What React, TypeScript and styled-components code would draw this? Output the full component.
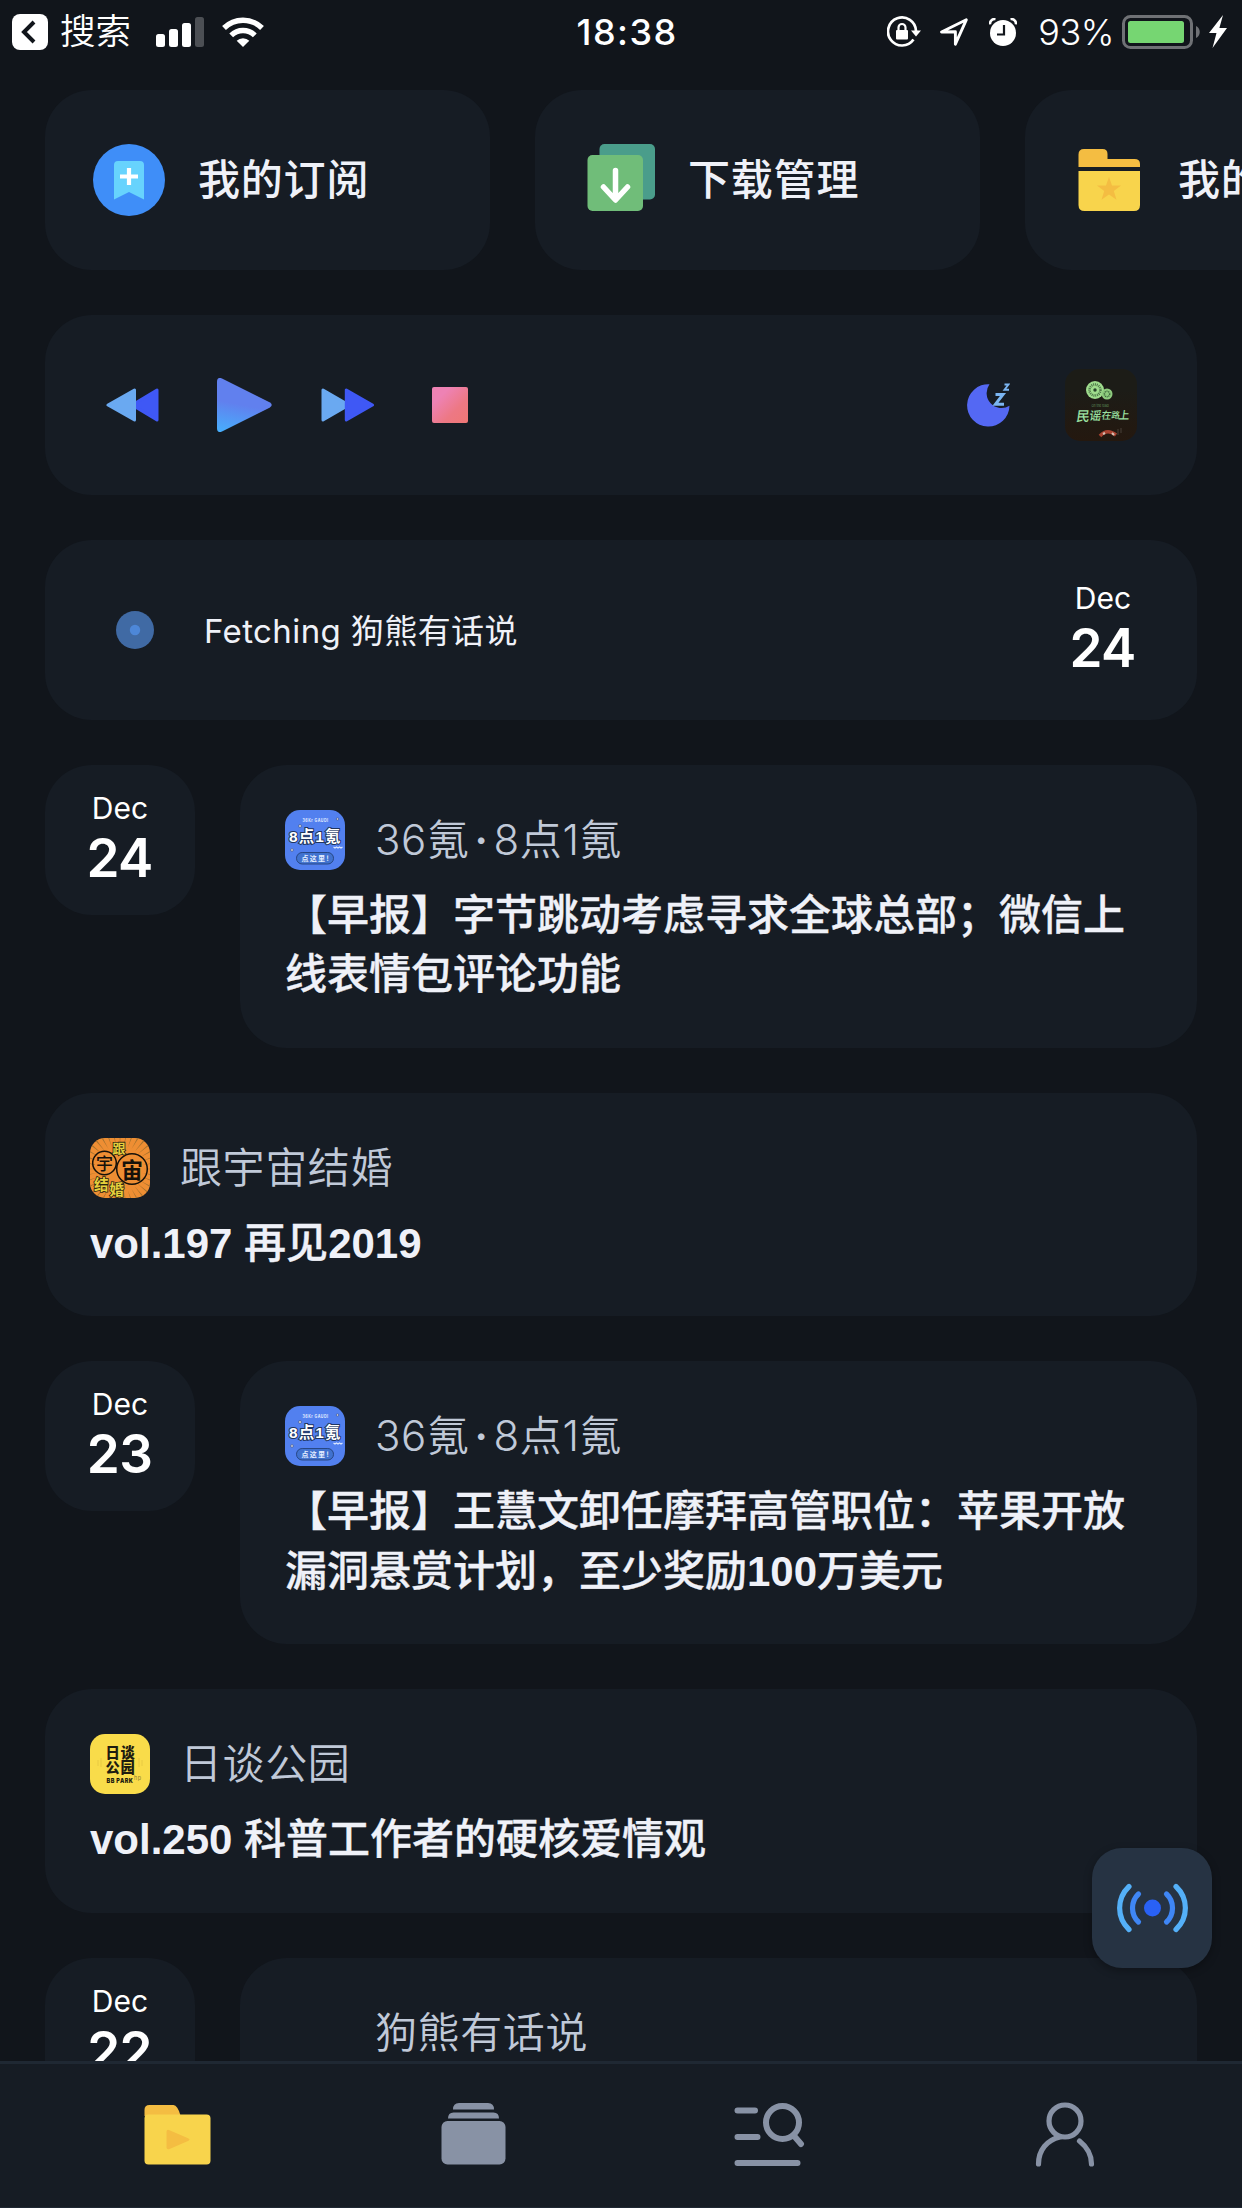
import React from 'react';
import styled, { createGlobalStyle } from 'styled-components';

const cjk = '"Noto Sans CJK SC", sans-serif';
const ui = `Inter, ${cjk}`;
const headline = `"Liberation Sans", ${cjk}`;

const colors = {
  page: '#11151b',
  card: '#161c24',
  line: '#1f2833',
  bright: '#eff1f8',
  muted: '#c0c9d8',
  tab: '#8892a5',
};

const GlobalStyle = createGlobalStyle`
  * { box-sizing: border-box; }
  body { margin: 0; background: ${colors.page}; }
  svg { display: block; flex: none; }
`;

const Screen = styled.div`
  position: relative;
  display: flex;
  flex-direction: column;
  width: 1242px;
  height: 2208px;
  overflow: hidden;
  background: ${colors.page};
  font-family: ${ui};
  color: #fff;
  text-spacing-trim: space-all;
`;

const StatusBar = styled.header`
  display: grid;
  grid-template-columns: 576.500px auto 1fr;
  align-items: center;
  flex: none;
  height: 62px;
  padding: 0 15px 0 0;
  font-size: 36px;
  line-height: 62px;
`;

const StatusGroup = styled.div<{ $end?: boolean }>`
  display: flex;
  align-items: center;
  justify-content: ${(p) => (p.$end ? 'flex-end' : 'flex-start')};
  padding-left: ${(p) => (p.$end ? 0 : 12)}px;
`;

const BackLabel = styled.span`
  margin: 0 25px 0 12px;
  padding-top: 1px;
  font-size: 35.5px;
  font-weight: 350;
`;

const Clock = styled.span`
  font-weight: 500;
  font-size: 36px;
  letter-spacing: 1.5px;
`;

const Percent = styled.span`
  margin: 0 8px 0 21px;
  font-size: 36px;
  font-weight: 300;
  letter-spacing: -0.5px;
`;

const Feed = styled.main`
  display: flex;
  flex-direction: column;
  flex: 1;
  min-height: 0;
  gap: 45px;
  padding: 28px 45px 0;
  overflow: hidden;
`;

const Shortcuts = styled.div`
  display: flex;
  flex: none;
  gap: 45px;
  margin-right: -45px;
  overflow: hidden;
`;

const Card = styled.section`
  flex: none;
  background: ${colors.card};
  border-radius: 47px;
`;

const Shortcut = styled(Card)`
  display: flex;
  align-items: center;
  gap: 33px;
  width: 445px;
  height: 180px;
  padding: 0 48px;
`;

const ShortcutLabel = styled.span`
  padding-bottom: 1px;
  font-size: 42px;
  font-weight: 500;
  letter-spacing: 0.8px;
  line-height: 60px;
  white-space: nowrap;
  color: ${colors.bright};
`;

const Player = styled(Card)`
  display: flex;
  align-items: center;
  justify-content: space-between;
  height: 180px;
  padding: 0 60px 0 61px;
`;

const Controls = styled.div<{ $gap: number }>`
  display: flex;
  align-items: center;
  gap: ${(p) => p.$gap}px;
`;

const SkipControls = styled(Controls)`
  margin-left: -9px;
`;

const Fetching = styled(Card)`
  display: flex;
  align-items: center;
  height: 180px;
  padding: 0 19px 0 71px;
`;

const FetchText = styled.span`
  flex: 1;
  margin-left: 50px;
  padding-bottom: 3px;
  font-size: 33px;
  letter-spacing: 0.4px;
  color: ${colors.bright};
`;

const DateBox = styled.div`
  display: flex;
  flex-direction: column;
  align-items: center;
  flex: none;
  width: 150px;
  height: 150px;
  padding-top: 25px;
  border-radius: 47px;
`;

const DateTile = styled(DateBox)`
  background: ${colors.card};
`;

const Month = styled.span`
  font-size: 30px;
  line-height: 36px;
`;

const Day = styled.span`
  font-size: 53px;
  font-weight: 600;
  line-height: 64px;
  letter-spacing: -0.7px;
  margin-left: -1px;
`;

const DayRow = styled.div`
  display: flex;
  flex: none;
  align-items: flex-start;
  gap: 45px;
`;

const Episode = styled(Card)`
  flex: 1 0 0;
  padding: 45px 45px 43.2px;
`;

const WideEpisode = styled(Card)`
  padding: 45px 45px 43.2px;
`;

const Source = styled.div`
  display: flex;
  align-items: center;
  gap: 30px;
  height: 60px;
  font-size: 42px;
  font-weight: 350;
  letter-spacing: 0.6px;
  line-height: 60px;
  color: ${colors.muted};
`;

const Dot = styled.span`
  margin: 0 5px;
  font-weight: 600;
`;

const Headline = styled.h2`
  margin: 16px 0 0;
  font-family: ${headline};
  font-size: 42px;
  font-weight: 500;
  line-height: 59.3px;
  color: ${colors.bright};
  -webkit-text-stroke: 0.35px ${colors.bright};
`;

const Latin = styled.span`
  font-weight: 700;
  -webkit-text-stroke: 0;
`;

const CoverSlot = styled.div<{ $size: number }>`
  width: ${(p) => p.$size}px;
  height: ${(p) => p.$size}px;
  border-radius: 15px;
  overflow: hidden;
  flex: none;
`;

const Fab = styled.button`
  position: absolute;
  right: 30px;
  bottom: 240px;
  display: flex;
  align-items: center;
  justify-content: center;
  width: 120px;
  height: 120px;
  padding: 0;
  border: 0;
  border-radius: 30px;
  background: #263343;
  box-shadow: 0 3px 9px rgba(0, 0, 0, 0.3);
`;

const TabBar = styled.nav`
  display: grid;
  grid-template-columns: repeat(4, 1fr);
  flex: none;
  height: 147px;
  padding: 0 29px 2px 30px;
  border-top: 3px solid ${colors.line};
  border-bottom: 1px solid ${colors.line};
  background: ${colors.card};
`;

const Tab = styled.div`
  display: flex;
  align-items: center;
  justify-content: center;
`;

function BackIcon() {
  return (
    <svg width="36" height="36" viewBox="0 0 36 36">
      <rect width="36" height="36" rx="8" fill="#fff" />
      <path d="M22 8 12 18l10 10" fill="none" stroke={colors.page} strokeWidth="4" />
    </svg>
  );
}

function SignalIcon() {
  return (
    <svg width="48" height="30" viewBox="0 0 48 30" fill="#fff">
      <rect y="17" width="9" height="13" rx="2.5" />
      <rect x="13" y="12" width="9" height="18" rx="2.5" />
      <rect x="26" y="6" width="9" height="24" rx="2.5" />
      <rect x="39" width="9" height="30" rx="2.5" fill="#4c4f54" />
    </svg>
  );
}

const Wifi = styled.svg`
  margin-left: 18px;
`;

function WifiIcon() {
  return (
    <Wifi width="42" height="30" viewBox="0 0 42 30" fill="none" stroke="#fff" strokeWidth="5.4">
      <path d="M2 11a27 27 0 0 1 38 0" />
      <path d="M9.2 18.4a16.800 16.800 0 0 1 23.600 0" />
      <path d="M21 30l-6.300-6.300a9 9 0 0 1 12.600 0z" fill="#fff" stroke="none" />
    </Wifi>
  );
}

function RotationLockIcon() {
  return (
    <svg width="34" height="32" viewBox="0 0 34 32">
      <path d="M26.500 23.500A14 14 0 1 1 29 15" fill="none" stroke="#fff" strokeWidth="2.700" />
      <path d="M24 14.500h10l-5 6z" fill="#fff" />
      <rect x="9" y="14" width="12" height="9.500" rx="1" fill="#fff" />
      <path d="M11.500 15v-3.500a3.500 3.500 0 0 1 7 0V15" fill="none" stroke="#fff" strokeWidth="2.200" />
    </svg>
  );
}

const Spaced = styled.svg<{ $left: number }>`
  margin-left: ${(p) => p.$left}px;
`;

function LocationIcon() {
  return (
    <Spaced $left={19} width="28" height="28" viewBox="0 0 28 28" fill="none" stroke="#fff" strokeWidth="2.900" strokeLinejoin="round">
      <path d="M1.500 14 26.300 1.800 15.400 26.200V13.800z" />
    </Spaced>
  );
}

function AlarmIcon() {
  return (
    <Spaced $left={21} width="28" height="28" viewBox="0 0 28 28">
      <circle cx="14" cy="15" r="13" fill="#fff" />
      <path d="M1 6.500A5 5 0 0 1 6.500 1M27 6.500A5 5 0 0 0 21.500 1" fill="none" stroke="#fff" strokeWidth="2.600" />
      <path d="M15 7v9.500H8" fill="none" stroke={colors.page} strokeWidth="2.200" />
    </Spaced>
  );
}

function BatteryIcon() {
  return (
    <svg width="78" height="34" viewBox="0 0 78 34">
      <rect x="1.500" y="1.500" width="68" height="31" rx="7" fill="none" stroke="#6f7175" strokeWidth="3" />
      <rect x="6" y="6" width="56" height="22" rx="2.500" fill="#76d672" />
      <path d="M74 11c5 2 5 10 0 12z" fill="#6f7175" />
    </svg>
  );
}

function BoltIcon() {
  return (
    <Spaced $left={9} width="18" height="33" viewBox="0 0 18 33" fill="#fff">
      <path d="M14 0 0 18h7.500L3.500 33 18 13h-7.600z" />
    </Spaced>
  );
}

function SubscribeIcon() {
  return (
    <svg width="72" height="72" viewBox="0 0 72 72">
      <circle cx="36" cy="36" r="36" fill="#3f8ef8" />
      <path d="M25 17h22a4 4 0 0 1 4 4v34.500L36 48l-15 7.500V21a4 4 0 0 1 4-4z" fill="#67d3fd" />
      <path d="M36 24v17M27 32.500h18" stroke="#fff" strokeWidth="4.200" />
    </svg>
  );
}

function DownloadIcon() {
  return (
    <svg width="72" height="72" viewBox="0 0 72 72">
      <rect x="16.500" y="0" width="55.500" height="55.500" rx="5" fill="#4a9d8b" />
      <rect x="4.500" y="11" width="55.500" height="56" rx="5" fill="#70bd79" />
      <path d="M32.500 26.500V54M20.500 43l12 13 12-13" fill="none" stroke="#fff" strokeWidth="5.500" strokeLinecap="round" strokeLinejoin="round" />
    </svg>
  );
}

function FavouritesIcon() {
  return (
    <svg width="72" height="72" viewBox="0 0 72 72">
      <path d="M5.500 23V10.500Q5.500 5 11 5h18.500Q34.500 5 34.500 10v5h27q5.500 0 5.500 5V23z" fill="#f4bd42" />
      <path d="M5.500 27h61.500v34q0 6-6 6h-49.500q-6 0-6-6z" fill="#f8d44c" />
      <path d="m36 33 3 8.500h9l-7.200 5.400 2.700 8.900L36 50.500l-7.500 5.300 2.700-8.900-7.200-5.400h9z" fill="#f4bd42" />
    </svg>
  );
}

function RewindIcon() {
  return (
    <svg width="53" height="36" viewBox="0 0 53 36" strokeLinejoin="round" strokeWidth="3">
      <path d="M51 3v30L26 18z" fill="#3f58f5" stroke="#3f58f5" />
      <path d="M28.500 3v30L2 18z" fill="#6aa9f1" stroke="#6aa9f1" />
    </svg>
  );
}

function ForwardIcon() {
  return (
    <svg width="53" height="36" viewBox="0 0 53 36" strokeLinejoin="round" strokeWidth="3">
      <path d="M2 3v30l26-15z" fill="#6aa9f1" stroke="#6aa9f1" />
      <path d="M25.300 3v30L51.500 18z" fill="#3f58f5" stroke="#3f58f5" />
    </svg>
  );
}

function PlayIcon() {
  return (
    <svg width="55" height="54" viewBox="0 0 55 54">
      <defs>
        <linearGradient id="play" x1="0.300" y1="0" x2="0.100" y2="1">
          <stop offset="0.450" stopColor="#6180ee" />
          <stop offset="1" stopColor="#47aefc" />
        </linearGradient>
      </defs>
      <path d="M0 4q0-5.500 5-3.600L52.500 24.300q4.500 2.700 0 5.400L5 53.600Q0 55.500 0 50z" fill="url(#play)" />
    </svg>
  );
}

function StopIcon() {
  return (
    <svg width="36" height="36" viewBox="0 0 36 36">
      <defs>
        <linearGradient id="stop" x1="0" y1="0" x2="1" y2="1">
          <stop offset="0.250" stopColor="#ee82b4" />
          <stop offset="0.650" stopColor="#ed7884" />
          <stop offset="1" stopColor="#ef7775" />
        </linearGradient>
      </defs>
      <rect width="36" height="36" rx="2" fill="url(#stop)" />
    </svg>
  );
}

function SleepIcon() {
  return (
    <svg width="43" height="45" viewBox="0 0 43 45">
      <path d="M22.500 1.200A15 15 0 0 0 42.500 22.800 21.200 21.200 0 1 1 22.500 1.200z" fill="#5468f3" />
      <g fill="none" stroke="#7bb5f2">
        <path d="M28.500 11.500h7.500l-7.500 9.700h8.500" strokeWidth="3" />
        <path d="M37.500 1.500h4l-4 5.200h4.500" strokeWidth="1.900" />
      </g>
    </svg>
  );
}

function FolkCover() {
  return (
    <CoverSlot $size={72}>
      <svg width="72" height="72" viewBox="0 0 72 72">
        <defs>
          <linearGradient id="folk" x1="0" y1="0" x2="0" y2="1">
            <stop offset="0.300" stopColor="#1c1c17" />
            <stop offset="1" stopColor="#24180f" />
          </linearGradient>
        </defs>
        <rect width="72" height="72" fill="url(#folk)" />
        <circle cx="30" cy="21" r="9" fill="#9fdc8d" />
        <circle cx="30" cy="21" r="5.500" fill="none" stroke="#4d7848" strokeWidth="2.500" strokeDasharray="1 .8" />
        <circle cx="30" cy="21" r="1.700" fill="#28452a" />
        <circle cx="42" cy="25" r="5.500" fill="#8ecb7e" />
        <circle cx="42" cy="25" r="2.700" fill="none" stroke="#3d683c" strokeWidth="1.500" strokeDasharray="1 .7" />
        <text x="26.500" y="37.500" fontFamily="Inter" fontSize="4" fill="#5f965c" textLength="17" lengthAdjust="spacingAndGlyphs">On the road</text>
        <g fontFamily={cjk} fontWeight="500" fill="#9be0a0" transform="skewX(-8)">
          <text x="18" y="52" fontSize="13.500">民</text>
          <text x="31" y="51" fontSize="12">谣</text>
          <text x="43" y="50" fontSize="10">在</text>
          <text x="53" y="49" fontSize="8.500">路</text>
          <text x="60" y="50" fontSize="11">上</text>
        </g>
        <path d="M35 67q7-8 16-1" fill="none" stroke="#a94331" strokeWidth="3.500" />
        <path d="M38 65l2-1M47 64l2 2" stroke="#d6c2b6" strokeWidth="2" />
        <path d="M53 60v6M56 59v5" stroke="#494039" strokeWidth="1" />
      </svg>
    </CoverSlot>
  );
}

function KrCover() {
  return (
    <CoverSlot $size={60}>
      <svg width="60" height="60" viewBox="0 0 60 60">
        <rect width="60" height="60" fill="#5280ef" />
        <text x="17.500" y="12" fontFamily="Inter" fontSize="4.300" fontWeight="700" fill="#e3edff" textLength="26" lengthAdjust="spacingAndGlyphs">36Kr GAUDI</text>
        <g fill="#d8d6dc" stroke="#304c8b" strokeWidth="0.600">
          <circle cx="52.500" cy="9" r="1.200" />
          <circle cx="15" cy="16" r="1.500" />
          <circle cx="7" cy="40" r="1.400" />
        </g>
        <text x="4" y="32" fontFamily={`"Liberation Sans", ${cjk}`} fontSize="15.500" fontWeight="700" fill="#fff" stroke="#20355f" strokeWidth="2" paintOrder="stroke" textLength="52">8点1氪</text>
        <path d="M48.500 37l1.500 1 1.500-1 1.500 1 1.500-1 1.500 1 1.500-1" fill="none" stroke="#d9e6ff" strokeWidth="1.200" />
        <rect x="11.500" y="42.500" width="37" height="11.500" rx="5.700" fill="#4072cf" stroke="#284784" strokeWidth="1" />
        <text x="16.500" y="50.700" fontFamily={cjk} fontSize="7" fontWeight="700" fill="#e6efff" textLength="28">点这里!</text>
      </svg>
    </CoverSlot>
  );
}

function CosmosCover() {
  const rays = Array.from({ length: 36 }, (_, i) => i * 10);
  return (
    <CoverSlot $size={60}>
      <svg width="60" height="60" viewBox="0 0 60 60" fontFamily={cjk} fontWeight="700">
        <rect width="60" height="60" fill="#ee8e33" />
        {rays.map((angle) => (
          <path key={angle} d="M30 8 29 -16h2.200z" fill="#a4712d" transform={`rotate(${angle} 30 31)`} />
        ))}
        <g fill="none" stroke="#15110a" strokeWidth="1.500">
          <circle cx="14.500" cy="25" r="11.800" />
          <circle cx="42" cy="31" r="15.300" />
        </g>
        <g fill="#15110a">
          <text x="6" y="31.500" fontSize="17" fontWeight="500">宇</text>
          <text x="31" y="39.500" fontSize="22">宙</text>
        </g>
        <g fill="#e6d03c" stroke="#2b2410" strokeWidth="1.600" paintOrder="stroke">
          <text x="22.500" y="14.700" fontSize="13">跟</text>
          <text x="4" y="52" fontSize="14.500">结</text>
          <text x="19.500" y="56.500" fontSize="14.500">婚</text>
        </g>
      </svg>
    </CoverSlot>
  );
}

function ParkCover() {
  return (
    <CoverSlot $size={60}>
      <svg width="60" height="60" viewBox="0 0 60 60" fontFamily={cjk} fontWeight="900" fill="#1e1c10">
        <rect width="60" height="60" fill="#f9dc4a" />
        <path d="M8 26v6M11 24v9M49 24v9M52 26v6" stroke="#e8ca43" strokeWidth="1" />
        <text x="15.500" y="24" fontSize="14.300">日谈</text>
        <text x="15.500" y="39" fontSize="14.300">公园</text>
        <text x="16.500" y="49" fontFamily="Inter" fontSize="6.300" textLength="27" lengthAdjust="spacingAndGlyphs">BB PARK</text>
        <text x="44" y="46" fontFamily="Inter" fontSize="5.500" fontWeight="400" fill="#8d7e32">hp</text>
      </svg>
    </CoverSlot>
  );
}

function LoadingDot() {
  return (
    <svg width="38" height="38" viewBox="0 0 38 38">
      <circle cx="19" cy="19" r="19" fill="#406aa4" />
      <circle cx="19" cy="19" r="5.200" fill="#4d87d8" />
    </svg>
  );
}

function BroadcastIcon() {
  return (
    <svg width="71" height="50" viewBox="0 0 71 50" fill="none" strokeWidth="5.200" strokeLinecap="round">
      <circle cx="35.500" cy="25" r="8.500" fill="#2961f5" />
      <path d="M21.500 11c-8 7.500-8 20.500 0 28M49.500 11c8 7.500 8 20.500 0 28" stroke="#3f86f5" />
      <path d="M12 3.500c-12.500 12-12.500 31 0 43M59 3.500c12.500 12 12.500 31 0 43" stroke="#54b0f8" />
    </svg>
  );
}

function FolderTab() {
  return (
    <svg width="67" height="60" viewBox="0 0 67 60">
      <path d="M.5 11V5q0-5 5-5h24q4 0 7 10.500z" fill="#f4bd42" />
      <rect x=".5" y="9.500" width="66" height="50" rx="4" fill="#f8d44c" />
      <path d="M22.500 27q0-3 3-1.800l18.500 8q3 1.300 0 2.800l-18.500 8q-3 1.200-3-1.800z" fill="#f4bd42" />
    </svg>
  );
}

function StackTab() {
  return (
    <svg width="65" height="64" viewBox="0 0 65 64" fill={colors.tab}>
      <path d="M12 6.500Q12 0 18 0h29q6 0 6 6.500zM7 15.500Q7 9.500 12.500 9.500h40q5.500 0 5.500 6z" />
      <rect x=".5" y="18" width="64" height="43.500" rx="6" />
    </svg>
  );
}

function SearchTab() {
  return (
    <svg width="71" height="63" viewBox="0 0 71 63" fill="none" stroke={colors.tab} strokeWidth="6" strokeLinecap="round">
      <path d="M3.500 7.500h17.500M3.500 34h20M3.500 60h60" />
      <circle cx="48.500" cy="19.500" r="16.500" />
      <path d="m61 34 6 7" />
    </svg>
  );
}

function ProfileTab() {
  return (
    <svg width="60" height="65" viewBox="0 0 60 65" fill="none" stroke={colors.tab} strokeWidth="5.200" strokeLinecap="round">
      <circle cx="30" cy="19" r="16" />
      <path d="M25 35C12 38 3.500 48 3.500 62M44.500 39C52 45 56.500 53 56.500 62" />
    </svg>
  );
}

function HeadlineText({ text }: { text: string }) {
  return (
    <div>
      {text.split(/([\x20-\x7e]+)/).map((part, i) =>
        i % 2 ? <Latin key={i}>{part}</Latin> : part,
      )}
    </div>
  );
}

function SourceName({ name }: { name: string }) {
  const [first, second] = name.split('·');
  return (
    <span>
      {first}
      {second && <><Dot>·</Dot>{second}</>}
    </span>
  );
}

const episodes = [
  { date: ['Dec', '24'], source: '36氪·8点1氪', Cover: KrCover, title: ['【早报】字节跳动考虑寻求全球总部；微信上', '线表情包评论功能'] },
  { source: '跟宇宙结婚', Cover: CosmosCover, title: ['vol.197 再见2019'] },
  { date: ['Dec', '23'], source: '36氪·8点1氪', Cover: KrCover, title: ['【早报】王慧文卸任摩拜高管职位：苹果开放', '漏洞悬赏计划，至少奖励100万美元'] },
  { source: '日谈公园', Cover: ParkCover, title: ['vol.250 科普工作者的硬核爱情观'] },
  { date: ['Dec', '22'], source: '狗熊有话说', Cover: null, title: [] },
];

export default function App() {
  return (
    <Screen>
      <GlobalStyle />
      <StatusBar>
        <StatusGroup>
          <BackIcon />
          <BackLabel>搜索</BackLabel>
          <SignalIcon />
          <WifiIcon />
        </StatusGroup>
        <Clock>18:38</Clock>
        <StatusGroup $end>
          <RotationLockIcon />
          <LocationIcon />
          <AlarmIcon />
          <Percent>93%</Percent>
          <BatteryIcon />
          <BoltIcon />
        </StatusGroup>
      </StatusBar>

      <Feed>
        <Shortcuts>
          <Shortcut><SubscribeIcon /><ShortcutLabel>我的订阅</ShortcutLabel></Shortcut>
          <Shortcut><DownloadIcon /><ShortcutLabel>下载管理</ShortcutLabel></Shortcut>
          <Shortcut><FavouritesIcon /><ShortcutLabel>我的收藏</ShortcutLabel></Shortcut>
        </Shortcuts>

        <Player>
          <Controls $gap={58}>
            <RewindIcon />
            <PlayIcon />
            <SkipControls $gap={58}>
              <ForwardIcon />
              <StopIcon />
            </SkipControls>
          </Controls>
          <Controls $gap={55}>
            <SleepIcon />
            <FolkCover />
          </Controls>
        </Player>

        <Fetching>
          <LoadingDot />
          <FetchText>Fetching 狗熊有话说</FetchText>
          <DateBox>
            <Month>Dec</Month>
            <Day>24</Day>
          </DateBox>
        </Fetching>

        {episodes.map(({ date, source, Cover, title }) => {
          const Body = date ? Episode : WideEpisode;
          const body = (
            <Body key={source}>
              <Source>
                {Cover ? <Cover /> : <CoverSlot $size={60} />}
                <SourceName name={source} />
              </Source>
              <Headline>
                {title.map((line) => <HeadlineText key={line} text={line} />)}
              </Headline>
            </Body>
          );
          if (!date) return body;
          return (
            <DayRow key={date[1]}>
              <DateTile>
                <Month>{date[0]}</Month>
                <Day>{date[1]}</Day>
              </DateTile>
              {body}
            </DayRow>
          );
        })}
      </Feed>

      <Fab aria-label="Live"><BroadcastIcon /></Fab>

      <TabBar>
        <Tab><FolderTab /></Tab>
        <Tab><StackTab /></Tab>
        <Tab><SearchTab /></Tab>
        <Tab><ProfileTab /></Tab>
      </TabBar>
    </Screen>
  );
}
